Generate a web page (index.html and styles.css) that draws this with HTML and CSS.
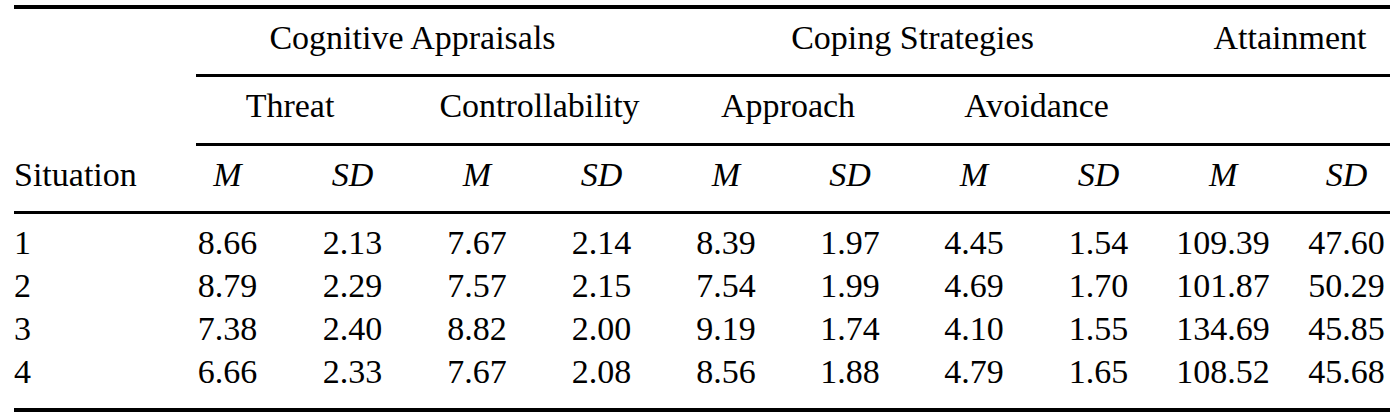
FILE: index.html
```html
<!DOCTYPE html>
<html lang="en">
<head>
<meta charset="utf-8">
<title>Appraisals, coping and attainment by situation</title>
<link rel="stylesheet" href="styles.css">
</head>
<body>
<table class="stats">
  <colgroup>
    <col class="col-situation">
    <col class="col-first">
    <col class="col-w125">
    <col class="col-w124">
    <col class="col-w125">
    <col class="col-w124">
    <col class="col-w124">
    <col class="col-w124">
    <col class="col-w125">
    <col class="col-w124">
    <col class="col-last">
  </colgroup>
  <thead>
    <tr class="head-groups">
      <td class="blank"></td>
      <th class="group lead-group" colspan="4">Cognitive Appraisals</th>
      <th class="group" colspan="4">Coping Strategies</th>
      <th class="group attain" colspan="2">Attainment</th>
    </tr>
    <tr class="head-subs">
      <td class="blank"></td>
      <th class="sub lead" colspan="2">Threat</th>
      <th class="sub" colspan="2">Controllability</th>
      <th class="sub" colspan="2">Approach</th>
      <th class="sub" colspan="2">Avoidance</th>
      <th class="sub" colspan="2"></th>
    </tr>
    <tr class="head-stats">
      <th class="situation">Situation</th>
      <th class="stat lead">M</th>
      <th class="stat">SD</th>
      <th class="stat">M</th>
      <th class="stat">SD</th>
      <th class="stat">M</th>
      <th class="stat">SD</th>
      <th class="stat">M</th>
      <th class="stat">SD</th>
      <th class="stat">M</th>
      <th class="stat last">SD</th>
    </tr>
  </thead>
  <tbody>
    <tr class="data">
      <td class="situation">1</td>
      <td class="lead">8.66</td><td>2.13</td><td>7.67</td><td>2.14</td>
      <td>8.39</td><td>1.97</td><td>4.45</td><td>1.54</td>
      <td>109.39</td><td class="last">47.60</td>
    </tr>
    <tr class="data">
      <td class="situation">2</td>
      <td class="lead">8.79</td><td>2.29</td><td>7.57</td><td>2.15</td>
      <td>7.54</td><td>1.99</td><td>4.69</td><td>1.70</td>
      <td>101.87</td><td class="last">50.29</td>
    </tr>
    <tr class="data">
      <td class="situation">3</td>
      <td class="lead">7.38</td><td>2.40</td><td>8.82</td><td>2.00</td>
      <td>9.19</td><td>1.74</td><td>4.10</td><td>1.55</td>
      <td>134.69</td><td class="last">45.85</td>
    </tr>
    <tr class="data">
      <td class="situation">4</td>
      <td class="lead">6.66</td><td>2.33</td><td>7.67</td><td>2.08</td>
      <td>8.56</td><td>1.88</td><td>4.79</td><td>1.65</td>
      <td>108.52</td><td class="last">45.68</td>
    </tr>
  </tbody>
</table>
</body>
</html>
```
FILE: styles.css
```css
html, body {
  margin: 0;
  padding: 0;
  background: #ffffff;
}

body {
  color: #000000;
  font-family: "Liberation Serif", "Times New Roman", serif;
  font-size: 34px;
}

.stats {
  margin: 5px 0 0 14px;
  width: 1376px;
  table-layout: fixed;
  border-collapse: separate;
  border-spacing: 0;
  border-top: 4px solid #000;
  border-bottom: 4px solid #000;
}

.head-groups th,
.head-subs th,
.head-stats th,
.data td {
  font-family: "Liberation Serif", "Times New Roman", serif;
}

.col-situation { width: 182px; }
.col-first { width: 94px; }
.col-w125 { width: 125px; }
.col-w124 { width: 124px; }
.col-last { width: 105px; }

.stats th,
.stats td {
  padding: 0;
  color: #000000;
  font-weight: normal;
  text-align: center;
  vertical-align: top;
  white-space: nowrap;
}

/* header rows */
.stats thead th,
.stats thead td {
  padding-top: 7px;
  padding-bottom: 15px;
  line-height: 43px;
}

.stats thead .head-subs th,
.stats thead .head-subs td {
  padding-bottom: 16px;
}

.group,
.sub,
.head-stats th {
  border-bottom: 3px solid #000;
}

.lead { padding-right: 31px !important; }
.lead-group { padding-right: 35px !important; }
.attain { padding-left: 29px !important; }
.last { padding-left: 18px !important; }
.stat { font-style: italic; }
.situation { text-align: left !important; }

/* body rows */
.stats tbody td { line-height: 43px; }
.stats tbody tr:first-child td { padding-top: 7px; }
.stats tbody tr:last-child td { padding-bottom: 15px; }
```
